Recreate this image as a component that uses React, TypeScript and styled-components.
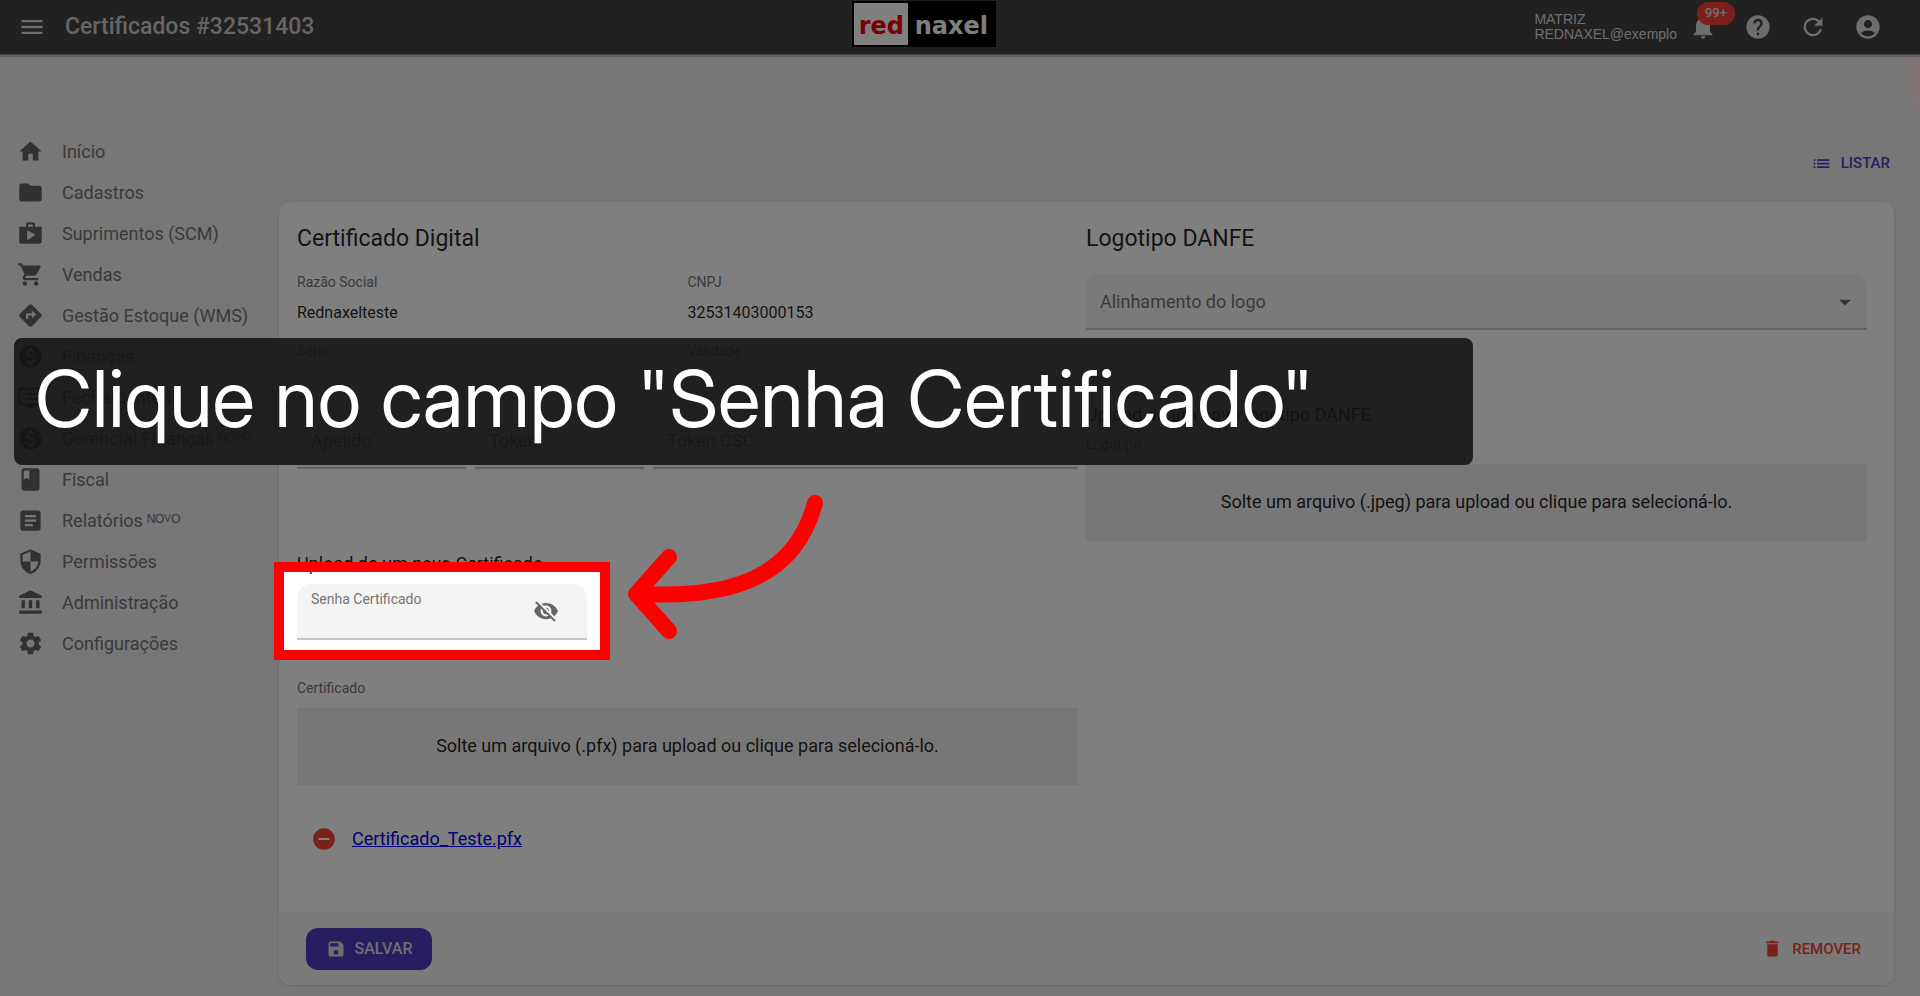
import React from "react";
import styled, { createGlobalStyle } from "styled-components";
import {
  MdHome, MdFolder, MdShop, MdShoppingCart, MdDirections, MdMonetizationOn, MdDvr, MdBook,
  MdArticle, MdSecurity, MdAccountBalance, MdSettings, MdMenu, MdNotifications, MdHelp,
  MdRefresh, MdAccountCircle, MdList, MdVisibilityOff, MdRemoveCircle, MdSave, MdDelete,
  MdArrowDropDown,
} from "react-icons/md";
import type { IconType } from "react-icons";

const Global = createGlobalStyle`
  *, *::before, *::after { box-sizing: border-box; }
  body { margin: 0; background: #eeeeee; font-family: Roboto, sans-serif; color: rgba(0,0,0,.87); }
  button { font: inherit; border: 0; background: none; padding: 0; cursor: pointer; }
  h1, h2, h3, p, dl, dd, ul { margin: 0; padding: 0; }
  body, #root { overflow-x: hidden; }
`;

const Page = styled.div`
  position: relative;
  min-height: 100vh;
  display: flex;
  flex-direction: column;
`;

const TopBar = styled.header`
  height: 54px;
  padding: 0 38px 0 18px;
  display: flex;
  justify-content: space-between;
  align-items: center;
  background: #424242;
  color: #fff;
  box-shadow: 0 1px 0 #8c8484, 0 3px 0 #c8bebe;
`;

const BarStart = styled.div`
  display: flex;
  align-items: center;
  gap: 19px;
`;

const Title = styled.h1`
  font-size: 23px;
  line-height: 32px;
  font-weight: 500;
  padding-bottom: 1px;
  color: #ccc;
`;

const IconButton = styled.button`
  display: flex;
  font-size: 28px;
  color: #ddd;
`;

const Logo = styled.a`
  display: flex;
  align-self: start;
  margin-top: 1px;
  height: 46px;
  width: 144px;
  padding: 2px;
  background: #000;
  color: #fff;
  font: 700 24px/46px "DejaVu Sans", Verdana, sans-serif;
  text-decoration: none;
`;

const LogoRed = styled.span`
  width: 54px;
  height: 42px;
  text-align: center;
  background: #fff;
  color: #f00000;
`;

const LogoRest = styled.span`
  flex: 1;
  text-align: center;
`;

const BarEnd = styled.div`
  display: flex;
  align-items: center;
  justify-content: flex-end;
  gap: 27px;
`;

const Account = styled.p`
  font: 14px/15px "Liberation Sans", Arial, sans-serif;
  color: #ddd;
  margin-right: -15px;
`;

const Bell = styled.div`
  position: relative;
  display: flex;
`;

const Badge = styled.span`
  position: absolute;
  left: 8px;
  top: -11px;
  width: 38px;
  height: 23px;
  border-radius: 12px;
  background: #f44336;
  color: #ddd;
  font-size: 13px;
  line-height: 22px;
  font-weight: 500;
  text-align: center;
`;

const Strip = styled.div`
  height: 56px;
  margin-left: 8px;
  padding-top: 3px;
  display: flex;
  justify-content: flex-end;
  border-bottom: 1px solid #e4e4e4;
`;

const StripEdge = styled.span`
  width: 11px;
  background: #ffe9e7;
  border-bottom-right-radius: 8px;
`;

const Body = styled.div`
  flex: 1;
  display: flex;
`;

const Sidebar = styled.nav`
  width: 279px;
  flex: none;
  padding: 21px 0 0 17px;
`;

const NavList = styled.ul`
  list-style: none;
`;

const NavLink = styled.a`
  display: flex;
  align-items: center;
  gap: 18px;
  height: 41px;
  color: #757575;
  text-decoration: none;
  font-size: 18px;
  line-height: 24px;
  white-space: nowrap;
  & > svg { font-size: 27px; color: #636363; flex: none; }
`;

const Main = styled.main`
  flex: 1;
  min-width: 0;
  padding: 33px 26px 11px 0;
`;

const Actions = styled.div`
  display: flex;
  justify-content: flex-end;
  padding-right: 4px;
  height: 59px;
`;

const TextButton = styled.button<{ $tone: string }>`
  display: flex;
  align-items: center;
  gap: 9px;
  height: 40px;
  font-size: 15px;
  font-weight: 500;
  color: ${(p) => p.$tone};
  & > svg { font-size: 21px; }
`;

const Card = styled.form`
  background: #fff;
  border-radius: 12px;
  box-shadow: 0 1px 3px rgba(0, 0, 0, 0.12);
`;

const CardBody = styled.div`
  display: grid;
  grid-template-columns: 1fr 1fr;
  gap: 8px;
  padding: 16px 27px 0 18px;
  min-height: 710px;
`;

const Column = styled.section`
  display: flex;
  flex-direction: column;
`;

const Heading = styled.h2`
  font-size: 23px;
  line-height: 42px;
  font-weight: 400;
`;

const Facts = styled.dl`
  display: grid;
  grid-template-columns: 1fr 1fr;
  margin-top: 12px;
  height: 132px;
  row-gap: 12px;
  align-content: start;
`;

const Fact = styled.div`
  height: 57px;
`;

const Term = styled.dt`
  font-size: 14px;
  line-height: 20px;
  color: #757575;
`;

const Value = styled.dd`
  margin-top: 11px;
  font-size: 16px;
  line-height: 20px;
`;

const FieldRow = styled.div`
  display: grid;
  grid-template-columns: 169px 169px 1fr;
  gap: 9px;
  padding-top: 9px;
`;

const Field = styled.div`
  position: relative;
  display: flex;
  height: 56px;
  border-radius: 14px 14px 0 0;
  border-bottom: 2px solid #c6c6c6;
  background: #f4f4f4;
  color: #757575;
`;

const Input = styled.input`
  width: 100%;
  border: 0;
  outline: 0;
  background: none;
  padding: 0 14px;
  font: 18px Roboto, sans-serif;
  color: #333;
  &::placeholder { color: #757575; opacity: 1; }
`;

const SelectField = styled(Field)`
  margin-top: 14px;
`;

const Select = styled.select`
  width: 100%;
  appearance: none;
  border: 0;
  outline: 0;
  background: none;
  padding: 0 14px;
  font: 18px Roboto, sans-serif;
  color: #757575;
`;

const SelectArrow = styled(MdArrowDropDown)`
  position: absolute;
  right: 8px;
  top: 14px;
  font-size: 28px;
  color: #666;
  pointer-events: none;
`;

const Subheading = styled.h3<{ $space: number }>`
  font-size: 18px;
  line-height: 24px;
  font-weight: 400;
  margin-top: ${(p) => p.$space}px;
`;

const PasswordField = styled(Field)`
  width: 290px;
  margin-top: 8px;
  & input { padding-top: 18px; }
`;

const FloatingLabel = styled.label`
  position: absolute;
  left: 14px;
  top: 5px;
  font-size: 14px;
  line-height: 20px;
`;

const Reveal = styled.button`
  display: flex;
  align-items: center;
  margin-right: 28px;
  font-size: 26px;
  color: #666;
`;

const Spotlight = styled.div`
  position: absolute;
  inset: -22px -23px;
  z-index: 10;
  border: 10px solid #ff0000;
  box-shadow: 0 0 0 200vmax rgba(0, 0, 0, 0.5);
  pointer-events: none;
`;

const Arrow = styled.svg`
  position: absolute;
  left: 318px;
  top: -102px;
  z-index: 12;
  width: 220px;
  height: 170px;
  fill: none;
  stroke: #ff0000;
  stroke-width: 16;
  stroke-linecap: round;
  stroke-linejoin: round;
  pointer-events: none;
`;

const DropLabel = styled.span<{ $space: number }>`
  font-size: 14px;
  line-height: 20px;
  color: #757575;
  margin-top: ${(p) => p.$space}px;
`;

const DropZone = styled.button`
  height: 77px;
  flex: none;
  margin-top: 10px;
  padding-bottom: 2px;
  background: #eeeeee;
  color: rgba(0, 0, 0, 0.87);
  font-size: 18px;
  line-height: 24px;
`;

const FileRow = styled.div`
  display: flex;
  align-items: center;
  gap: 15px;
  margin: 40px 0 0 14px;
`;

const RemoveFile = styled.button`
  display: flex;
  font-size: 26px;
  color: #f44336;
`;

const FileLink = styled.a`
  font-size: 18px;
  line-height: 28px;
  color: #0000ee;
`;

const CardFooter = styled.footer`
  display: flex;
  align-items: center;
  justify-content: space-between;
  height: 73px;
  padding: 0 33px 0 27px;
  background: #f5f5f5;
  border-radius: 0 0 12px 12px;
`;

const SaveButton = styled.button`
  display: flex;
  align-items: center;
  justify-content: center;
  gap: 9px;
  width: 126px;
  height: 42px;
  border-radius: 12px;
  background: #4f3cc4;
  color: #ddd;
  font-size: 16px;
  font-weight: 500;
  & > svg { font-size: 20px; }
`;

const Caption = styled.p`
  position: absolute;
  left: 14px;
  top: 338px;
  z-index: 11;
  width: 76%;
  height: 127px;
  padding-left: 21px;
  border-radius: 8px;
  background: rgba(18, 18, 18, 0.87);
  color: #fff;
  font: 400 79px/121px "Inter Display", Inter, sans-serif;
  white-space: nowrap;
`;

const menu: { icon: IconType; label: string }[] = [
  { icon: MdHome, label: "Início" },
  { icon: MdFolder, label: "Cadastros" },
  { icon: MdShop, label: "Suprimentos (SCM)" },
  { icon: MdShoppingCart, label: "Vendas" },
  { icon: MdDirections, label: "Gestão Estoque (WMS)" },
  { icon: MdMonetizationOn, label: "Finanças" },
  { icon: MdDvr, label: "Fechamentos" },
  { icon: MdMonetizationOn, label: "Gerencial Finanças ᴺᴼⱽᴼ" },
  { icon: MdBook, label: "Fiscal" },
  { icon: MdArticle, label: "Relatórios ᴺᴼⱽᴼ" },
  { icon: MdSecurity, label: "Permissões" },
  { icon: MdAccountBalance, label: "Administração" },
  { icon: MdSettings, label: "Configurações" },
];

const facts = [
  { term: "Razão Social", value: "Rednaxelteste" },
  { term: "CNPJ", value: "32531403000153" },
  { term: "Série", value: "" },
  { term: "Validade", value: "" },
];

export default function App() {
  return (
    <Page>
      <Global />
      <TopBar>
        <BarStart>
          <IconButton type="button" aria-label="Menu"><MdMenu /></IconButton>
          <Title>Certificados #32531403</Title>
        </BarStart>
        <Logo href="#"><LogoRed>red</LogoRed><LogoRest>naxel</LogoRest></Logo>
        <BarEnd>
          <Account>MATRIZ<br />REDNAXEL@exemplo</Account>
          <Bell>
            <IconButton type="button" aria-label="Notificações"><MdNotifications /></IconButton>
            <Badge>99+</Badge>
          </Bell>
          <IconButton type="button" aria-label="Ajuda"><MdHelp /></IconButton>
          <IconButton type="button" aria-label="Atualizar"><MdRefresh /></IconButton>
          <IconButton type="button" aria-label="Conta"><MdAccountCircle /></IconButton>
        </BarEnd>
      </TopBar>
      <Strip><StripEdge /></Strip>
      <Body>
        <Sidebar>
          <NavList>
            {menu.map(({ icon: Icon, label }) => (
              <li key={label}>
                <NavLink href="#"><Icon />{label}</NavLink>
              </li>
            ))}
          </NavList>
        </Sidebar>
        <Main>
          <Actions>
            <TextButton type="button" $tone="#4f3cc4"><MdList />LISTAR</TextButton>
          </Actions>
          <Card>
            <CardBody>
              <Column>
                <Heading>Certificado Digital</Heading>
                <Facts>
                  {facts.map((f) => (
                    <Fact key={f.term}><Term>{f.term}</Term><Value>{f.value}</Value></Fact>
                  ))}
                </Facts>
                <FieldRow>
                  <Field><Input aria-label="Apelido" placeholder="Apelido" /></Field>
                  <Field><Input aria-label="Token" placeholder="Token" /></Field>
                  <Field><Input aria-label="Token CSC" placeholder="Token CSC" /></Field>
                </FieldRow>
                <Subheading $space={83}>Upload de um novo Certificado</Subheading>
                <PasswordField>
                  <FloatingLabel htmlFor="senha">Senha Certificado</FloatingLabel>
                  <Input id="senha" type="password" />
                  <Reveal type="button" aria-label="Mostrar senha"><MdVisibilityOff /></Reveal>
                  <Spotlight />
                  <Arrow viewBox="0 0 220 170">
                    <path d="M200 21C182 88 128 117 28 112" />
                    <path d="M54 75L21 112L54 149" />
                  </Arrow>
                </PasswordField>
                <DropLabel $space={38}>Certificado</DropLabel>
                <DropZone type="button">Solte um arquivo (.pfx) para upload ou clique para selecioná-lo.</DropZone>
                <FileRow>
                  <RemoveFile type="button" aria-label="Remover arquivo"><MdRemoveCircle /></RemoveFile>
                  <FileLink href="#">Certificado_Teste.pfx</FileLink>
                </FileRow>
              </Column>
              <Column>
                <Heading>Logotipo DANFE</Heading>
                <SelectField>
                  <Select aria-label="Alinhamento do logo" defaultValue="">
                    <option value="">Alinhamento do logo</option>
                  </Select>
                  <SelectArrow />
                </SelectField>
                <Subheading $space={73}>Upload de um novo logotipo DANFE</Subheading>
                <DropLabel $space={7}>Logotipo</DropLabel>
                <DropZone type="button">Solte um arquivo (.jpeg) para upload ou clique para selecioná-lo.</DropZone>
              </Column>
            </CardBody>
            <CardFooter>
              <SaveButton type="submit"><MdSave />SALVAR</SaveButton>
              <TextButton type="button" $tone="#f44336"><MdDelete />REMOVER</TextButton>
            </CardFooter>
          </Card>
        </Main>
      </Body>
      <Caption>Clique no campo "Senha Certificado"</Caption>
    </Page>
  );
}
